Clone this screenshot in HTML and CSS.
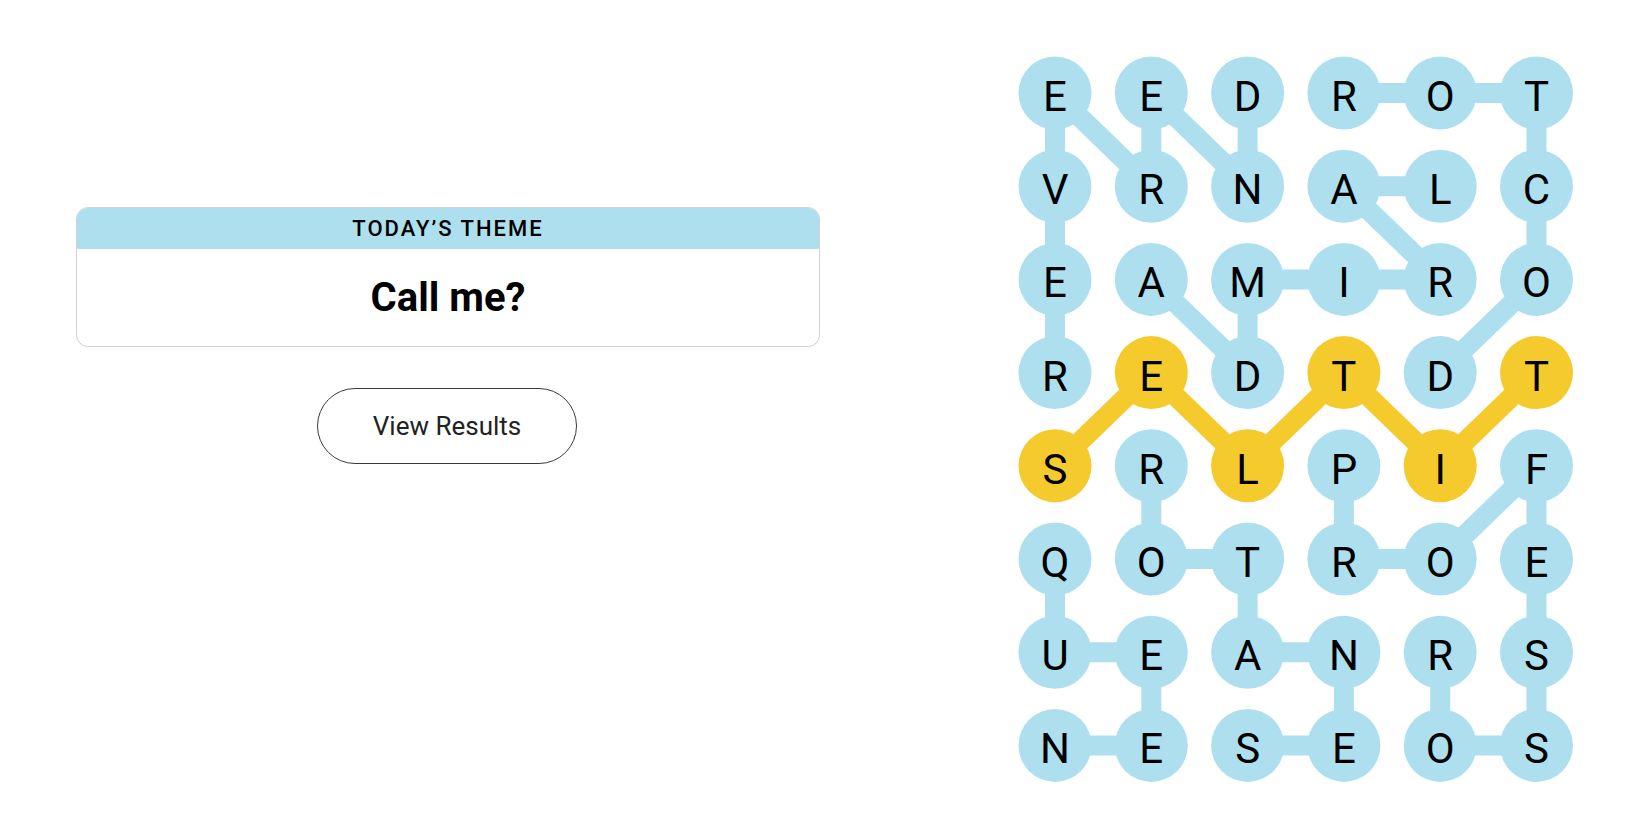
FILE: index.html
```html
<!DOCTYPE html>
<html lang="en">
<head>
<meta charset="utf-8">
<title>Strands</title>
<link rel="stylesheet" href="styles.css">
</head>
<body>
<main class="page">
  <section class="left">
    <div class="theme-card">
      <div class="theme-header"><span class="squish">TODAY’S THEME</span></div>
      <div class="theme-body"><span class="squish">Call me?</span></div>
    </div>
    <button class="results-btn"><span class="squish">View Results</span></button>
  </section>
  <section class="board-wrap">
    <svg class="board" width="556" height="727" viewBox="0 0 556 727" xmlns="http://www.w3.org/2000/svg">
      <g class="edges-blue">
        <line x1="37" y1="37" x2="37" y2="130.2"/>
        <line x1="37" y1="37" x2="133.3" y2="130.2"/>
        <line x1="133.3" y1="37" x2="133.3" y2="130.2"/>
        <line x1="133.3" y1="37" x2="229.6" y2="130.2"/>
        <line x1="229.6" y1="37" x2="229.6" y2="130.2"/>
        <line x1="325.9" y1="37" x2="422.2" y2="37"/>
        <line x1="422.2" y1="37" x2="518.5" y2="37"/>
        <line x1="518.5" y1="37" x2="518.5" y2="130.2"/>
        <line x1="37" y1="130.2" x2="37" y2="223.4"/>
        <line x1="325.9" y1="130.2" x2="422.2" y2="130.2"/>
        <line x1="325.9" y1="130.2" x2="422.2" y2="223.4"/>
        <line x1="518.5" y1="130.2" x2="518.5" y2="223.4"/>
        <line x1="37" y1="223.4" x2="37" y2="316.6"/>
        <line x1="133.3" y1="223.4" x2="229.6" y2="316.6"/>
        <line x1="229.6" y1="223.4" x2="229.6" y2="316.6"/>
        <line x1="229.6" y1="223.4" x2="325.9" y2="223.4"/>
        <line x1="325.9" y1="223.4" x2="422.2" y2="223.4"/>
        <line x1="518.5" y1="223.4" x2="422.2" y2="316.6"/>
        <line x1="133.3" y1="409.8" x2="133.3" y2="503"/>
        <line x1="325.9" y1="409.8" x2="325.9" y2="503"/>
        <line x1="518.5" y1="409.8" x2="422.2" y2="503"/>
        <line x1="518.5" y1="409.8" x2="518.5" y2="503"/>
        <line x1="133.3" y1="503" x2="229.6" y2="503"/>
        <line x1="229.6" y1="503" x2="229.6" y2="596.2"/>
        <line x1="325.9" y1="503" x2="422.2" y2="503"/>
        <line x1="518.5" y1="503" x2="518.5" y2="596.2"/>
        <line x1="37" y1="503" x2="37" y2="596.2"/>
        <line x1="37" y1="596.2" x2="133.3" y2="596.2"/>
        <line x1="133.3" y1="596.2" x2="133.3" y2="689.4"/>
        <line x1="37" y1="689.4" x2="133.3" y2="689.4"/>
        <line x1="229.6" y1="596.2" x2="325.9" y2="596.2"/>
        <line x1="325.9" y1="596.2" x2="325.9" y2="689.4"/>
        <line x1="229.6" y1="689.4" x2="325.9" y2="689.4"/>
        <line x1="422.2" y1="596.2" x2="422.2" y2="689.4"/>
        <line x1="518.5" y1="596.2" x2="518.5" y2="689.4"/>
        <line x1="422.2" y1="689.4" x2="518.5" y2="689.4"/>
      </g>
      <g class="edges-gold">
        <line x1="37" y1="409.8" x2="133.3" y2="316.6"/>
        <line x1="133.3" y1="316.6" x2="229.6" y2="409.8"/>
        <line x1="229.6" y1="409.8" x2="325.9" y2="316.6"/>
        <line x1="325.9" y1="316.6" x2="422.2" y2="409.8"/>
        <line x1="422.2" y1="409.8" x2="518.5" y2="316.6"/>
      </g>
      <g class="nodes">
        <circle class="blue" cx="37" cy="37" r="36.5"/><circle class="blue" cx="133.3" cy="37" r="36.5"/><circle class="blue" cx="229.6" cy="37" r="36.5"/><circle class="blue" cx="325.9" cy="37" r="36.5"/><circle class="blue" cx="422.2" cy="37" r="36.5"/><circle class="blue" cx="518.5" cy="37" r="36.5"/>
        <circle class="blue" cx="37" cy="130.2" r="36.5"/><circle class="blue" cx="133.3" cy="130.2" r="36.5"/><circle class="blue" cx="229.6" cy="130.2" r="36.5"/><circle class="blue" cx="325.9" cy="130.2" r="36.5"/><circle class="blue" cx="422.2" cy="130.2" r="36.5"/><circle class="blue" cx="518.5" cy="130.2" r="36.5"/>
        <circle class="blue" cx="37" cy="223.4" r="36.5"/><circle class="blue" cx="133.3" cy="223.4" r="36.5"/><circle class="blue" cx="229.6" cy="223.4" r="36.5"/><circle class="blue" cx="325.9" cy="223.4" r="36.5"/><circle class="blue" cx="422.2" cy="223.4" r="36.5"/><circle class="blue" cx="518.5" cy="223.4" r="36.5"/>
        <circle class="blue" cx="37" cy="316.6" r="36.5"/><circle class="gold" cx="133.3" cy="316.6" r="36.5"/><circle class="blue" cx="229.6" cy="316.6" r="36.5"/><circle class="gold" cx="325.9" cy="316.6" r="36.5"/><circle class="blue" cx="422.2" cy="316.6" r="36.5"/><circle class="gold" cx="518.5" cy="316.6" r="36.5"/>
        <circle class="gold" cx="37" cy="409.8" r="36.5"/><circle class="blue" cx="133.3" cy="409.8" r="36.5"/><circle class="gold" cx="229.6" cy="409.8" r="36.5"/><circle class="blue" cx="325.9" cy="409.8" r="36.5"/><circle class="gold" cx="422.2" cy="409.8" r="36.5"/><circle class="blue" cx="518.5" cy="409.8" r="36.5"/>
        <circle class="blue" cx="37" cy="503" r="36.5"/><circle class="blue" cx="133.3" cy="503" r="36.5"/><circle class="blue" cx="229.6" cy="503" r="36.5"/><circle class="blue" cx="325.9" cy="503" r="36.5"/><circle class="blue" cx="422.2" cy="503" r="36.5"/><circle class="blue" cx="518.5" cy="503" r="36.5"/>
        <circle class="blue" cx="37" cy="596.2" r="36.5"/><circle class="blue" cx="133.3" cy="596.2" r="36.5"/><circle class="blue" cx="229.6" cy="596.2" r="36.5"/><circle class="blue" cx="325.9" cy="596.2" r="36.5"/><circle class="blue" cx="422.2" cy="596.2" r="36.5"/><circle class="blue" cx="518.5" cy="596.2" r="36.5"/>
        <circle class="blue" cx="37" cy="689.4" r="36.5"/><circle class="blue" cx="133.3" cy="689.4" r="36.5"/><circle class="blue" cx="229.6" cy="689.4" r="36.5"/><circle class="blue" cx="325.9" cy="689.4" r="36.5"/><circle class="blue" cx="422.2" cy="689.4" r="36.5"/><circle class="blue" cx="518.5" cy="689.4" r="36.5"/>
      </g>
      <g class="letters">
        <text x="37" y="55">E</text><text x="133.3" y="55">E</text><text x="229.6" y="55">D</text><text x="325.9" y="55">R</text><text x="422.2" y="55">O</text><text x="518.5" y="55">T</text>
        <text x="37" y="148.2">V</text><text x="133.3" y="148.2">R</text><text x="229.6" y="148.2">N</text><text x="325.9" y="148.2">A</text><text x="422.2" y="148.2">L</text><text x="518.5" y="148.2">C</text>
        <text x="37" y="241.4">E</text><text x="133.3" y="241.4">A</text><text x="229.6" y="241.4">M</text><text x="325.9" y="241.4">I</text><text x="422.2" y="241.4">R</text><text x="518.5" y="241.4">O</text>
        <text x="37" y="334.6">R</text><text x="133.3" y="334.6">E</text><text x="229.6" y="334.6">D</text><text x="325.9" y="334.6">T</text><text x="422.2" y="334.6">D</text><text x="518.5" y="334.6">T</text>
        <text x="37" y="427.8">S</text><text x="133.3" y="427.8">R</text><text x="229.6" y="427.8">L</text><text x="325.9" y="427.8">P</text><text x="422.2" y="427.8">I</text><text x="518.5" y="427.8">F</text>
        <text x="37" y="521">Q</text><text x="133.3" y="521">O</text><text x="229.6" y="521">T</text><text x="325.9" y="521">R</text><text x="422.2" y="521">O</text><text x="518.5" y="521">E</text>
        <text x="37" y="614.2">U</text><text x="133.3" y="614.2">E</text><text x="229.6" y="614.2">A</text><text x="325.9" y="614.2">N</text><text x="422.2" y="614.2">R</text><text x="518.5" y="614.2">S</text>
        <text x="37" y="707.4">N</text><text x="133.3" y="707.4">E</text><text x="229.6" y="707.4">S</text><text x="325.9" y="707.4">E</text><text x="422.2" y="707.4">O</text><text x="518.5" y="707.4">S</text>
      </g>
    </svg>
  </section>
</main>
</body>
</html>
```
FILE: styles.css
```css
html, body {
  margin: 0;
  padding: 0;
  background: #ffffff;
}

.page {
  display: flex;
  width: 1650px;
  height: 825px;
  font-family: Roboto, "Liberation Sans", sans-serif;
  color: #000;
}

.left {
  width: 1018px;
  box-sizing: border-box;
  padding: 207px 0 0 76px;
  display: flex;
  flex-direction: column;
  align-items: flex-start;
}

.theme-card {
  width: 744px;
  box-sizing: border-box;
  border: 1px solid #d2d2d2;
  border-radius: 12px;
  overflow: hidden;
  background: #fff;
}

.theme-header {
  height: 41px;
  background: #aedfee;
  display: flex;
  align-items: center;
  justify-content: center;
  font-size: 22px;
  letter-spacing: 2px;
  font-weight: 500;
}

.theme-body {
  height: 97px;
  display: flex;
  align-items: center;
  justify-content: center;
  font-size: 40px;
  font-weight: 700;
}

.squish {
  display: inline-block;
}

.results-btn {
  margin: 41px 0 0 241px;
  width: 260px;
  height: 76px;
  border: 1px solid #3a3a3a;
  border-radius: 38px;
  background: #fff;
  font-family: inherit;
  font-size: 26px;
  color: #222;
  padding: 0;
  display: flex;
  align-items: center;
  justify-content: center;
}

.board-wrap {
  padding-top: 56px;
}

.board {
  display: block;
}

.edges-blue line {
  stroke: #aedfee;
  stroke-width: 20;
}

.edges-gold line {
  stroke: #f5ca2c;
  stroke-width: 20;
}

.nodes .blue {
  fill: #aedfee;
}

.nodes .gold {
  fill: #f5ca2c;
}

.letters text {
  font-family: Roboto, "Liberation Sans", sans-serif;
  font-size: 42px;
  font-weight: 400;
  fill: #000;
  text-anchor: middle;
}
```
